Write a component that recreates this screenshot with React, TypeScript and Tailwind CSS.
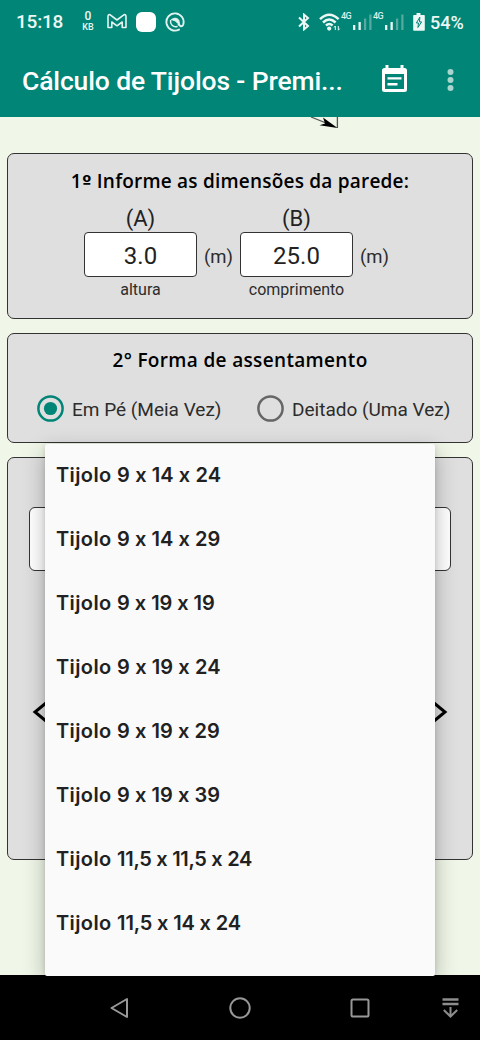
import React from 'react';

const bricks = [
  { size: '9 x 14 x 24', spacing: 'tracking-[0.1px]' },
  { size: '9 x 14 x 29', spacing: 'tracking-[0.05px]' },
  { size: '9 x 19 x 19', spacing: 'tracking-[-0.05px]' },
  { size: '9 x 19 x 24', spacing: 'tracking-[0.1px]' },
  { size: '9 x 19 x 29', spacing: 'tracking-[0.05px]' },
  { size: '9 x 19 x 39', spacing: 'tracking-[0.05px]' },
  { size: '11,5 x 11,5 x 24', spacing: 'tracking-[-0.3px]' },
  { size: '11,5 x 14 x 24', spacing: 'tracking-[-0.15px]' },
];

function GmailIcon() {
  return (
    <svg className="ml-[13px] h-[18px] w-[20px]" viewBox="0 0 20 18" fill="none" stroke="#e4f3f0" strokeWidth="1.6" strokeLinejoin="round">
      <path d="M1 3.6Q1 1 3.2 1.8L10 7L16.800 1.8Q19 1 19 3.6V14.500H15.200V9L10 12.800L4.800 9V14.500H1Z" />
    </svg>
  );
}

function ChatIcon() {
  return (
    <svg className="ml-[9px] h-5 w-5" viewBox="0 0 20 20" fill="none" stroke="#e4f3f0" strokeWidth="1.9" strokeLinecap="round">
      <path d="M14 17.600A8.600 8.600 0 1 1 18.200 12.600Q17.400 14.600 15.600 14.200L13.500 12.500" />
      <path d="M12 14.600A5.200 5.200 0 0 1 5.600 8.500" strokeWidth="1.5" />
      <path d="M6.500 7.400Q11.500 4.200 14 8.500L14.800 13.300L10.500 9.200Z" fill="#e4f3f0" strokeWidth="0.8" />
    </svg>
  );
}

function BluetoothIcon() {
  return (
    <svg className="h-[18px] w-[12px]" viewBox="0 0 12 18" fill="none" stroke="#edf8f5" strokeWidth="2">
      <path d="M1 4.5L10 13L6 16.4V1.6L10 5L1 13.5" />
    </svg>
  );
}

function WifiIcon() {
  return (
    <svg className="ml-[9px] h-[19px] w-[22px]" viewBox="0 0 22 19" fill="none" stroke="#edf8f5" strokeWidth="2.5">
      <path d="M1 6.2Q10.2 -2.8 19.6 6.2M4 9.5Q10.2 3.6 16.6 9.5M7 12.5Q10.2 9.5 13.6 12.5" />
      <circle cx="10.2" cy="15.6" r="2.1" fill="#edf8f5" stroke="none" />
      <path d="M16.3 17V13L15 14.5M19.3 13V17.2L20.8 15.6" strokeWidth="1" />
    </svg>
  );
}

function SignalIcon() {
  return (
    <span className="flex w-8 items-start">
      <span className="-mt-[2px] w-[11px] font-[Roboto] text-[9px] leading-[10px] font-medium tracking-[-0.6px] text-[#dcefeb]">4G</span>
      <svg className="h-[18px] w-5" viewBox="0 0 20 18">
        <path d="M1 12h2.3v5H1zM6.5 9h2.3v8H6.5z" fill="#edf8f5" />
        <path d="M12 5.5h2.2V17H12zM17.3 1.5h2.2V17h-2.2z" fill="#58aaa0" />
      </svg>
    </span>
  );
}

function BatteryIcon() {
  return (
    <svg className="ml-2 h-[18px] w-[12px]" viewBox="0 0 12 18">
      <path d="M3.5 0h4v2H11q.8 0 .8.8V17q0 .8-.8.8H1q-.8 0-.8-.8V2.800Q.2 2 1 2h2.500z" fill="#edf8f5" />
      <path d="M6.800 4.200L3.400 10H5.500L4.900 14.500L8.600 8.900H6.500z" fill="#edf8f5" stroke="#008577" strokeWidth="1" />
    </svg>
  );
}

function StatusBar() {
  return (
    <div className="flex h-11 items-center pl-4 font-[Roboto,sans-serif] text-[#edf8f5]">
      <span className="w-[66px] text-[19px] font-medium tracking-[-0.2px]">15:18</span>
      <span className="flex w-3 flex-col items-center font-medium">
        <span className="text-[12px] leading-[11px]">0</span>
        <span className="text-[9px] leading-[11px]">KB</span>
      </span>
      <GmailIcon />
      <span className="ml-[9px] size-5 rounded-[6px] bg-white" />
      <ChatIcon />
      <span className="ml-auto flex items-center pr-[15px]">
        <BluetoothIcon />
        <WifiIcon />
        <SignalIcon />
        <SignalIcon />
        <BatteryIcon />
        <span className="ml-[5px] w-[35px] text-[18px] font-medium whitespace-nowrap">54%</span>
      </span>
    </div>
  );
}

function AppBar() {
  return (
    <div className="flex h-[73px] items-center pl-[22px] text-white">
      <h1 className="w-[360px] font-[Roboto,sans-serif] text-[26.500px] font-medium tracking-[-0.14px] whitespace-nowrap">Cálculo de Tijolos - Premi...</h1>
      <svg className="-mt-1 h-[27px] w-[25px] shrink-0" viewBox="0 0 25 27">
        <path fillRule="evenodd" d="M3.500 0H6.500V3H18.500V0H21.500V3H22.500Q25 3 25 5.500V24.500Q25 27 22.500 27H2.500Q0 27 0 24.500V5.500Q0 3 2.500 3H3.500ZM3 9V24H22V9Z" fill="#fff" />
        <path d="M5.500 12.200h14v2.400h-14zM5.500 18h10v2.400h-10z" fill="#fff" />
      </svg>
      <svg className="-mt-px ml-10 h-6 w-[7px]" viewBox="0 0 7 24" fill="#a9d5cf">
        <circle cx="3.500" cy="4" r="3" />
        <circle cx="3.500" cy="12" r="3" />
        <circle cx="3.500" cy="20" r="3" />
      </svg>
    </div>
  );
}

function Dimension({ mark, value, caption }: { mark: string; value: string; caption: string }) {
  return (
    <div className="flex w-[156px] flex-col">
      <div className="flex h-[28px] w-[113px] items-center justify-center text-[22px] text-[#222]">{mark}</div>
      <div className="flex items-center">
        <div className="flex h-[45px] w-[113px] shrink-0 items-center justify-center rounded-[4px] border border-[#333] bg-white pt-[3px] text-[24px] text-[#222]">{value}</div>
        <span className="ml-[7px] pt-[6px] text-[18.500px] text-[#2c2c2c]">(m)</span>
      </div>
      <div className="flex h-[24px] w-[113px] items-center justify-center pt-px text-[16px] text-[#2c2c2c]">{caption}</div>
    </div>
  );
}

function Radio({ checked }: { checked?: boolean }) {
  return (
    <svg className="size-[27px] shrink-0" viewBox="0 0 27 27" fill="none">
      <circle cx="13.500" cy="13.500" r="12.100" stroke={checked ? '#008577' : '#666'} strokeWidth="2.500" />
      {checked && <circle cx="13.500" cy="13.500" r="6.600" fill="#008577" />}
    </svg>
  );
}

function NavBar() {
  return (
    <nav className="flex h-[65px] items-center bg-black">
      <svg className="ml-[110px] h-[22px] w-[19px]" viewBox="0 0 19 22" fill="none" stroke="#999" strokeWidth="2" strokeLinejoin="round">
        <path d="M17 2V20L1.500 11Z" />
      </svg>
      <svg className="ml-[100px] size-[22px]" viewBox="0 0 22 22" fill="none" stroke="#999" strokeWidth="2">
        <circle cx="11" cy="11" r="9.700" />
      </svg>
      <svg className="ml-[99px] size-5" viewBox="0 0 20 20" fill="none" stroke="#999" strokeWidth="2">
        <rect x="1.500" y="1.500" width="17" height="17" rx="1.500" />
      </svg>
      <svg className="ml-[72px] h-[21px] w-[17px]" viewBox="0 0 17 21" fill="none" stroke="#8d8d8d" strokeWidth="2">
        <path d="M.5 2.500H16.500M.5 7H16.500" strokeWidth="2.700" />
        <path d="M8.500 10V19.500M1.800 13L8.500 19.500L15.200 13" />
      </svg>
    </nav>
  );
}

export default function App() {
  return (
    <div className="relative flex h-[1040px] w-[480px] flex-col overflow-hidden bg-[#f0f7e8]">
      <header className="h-[117px] shrink-0 bg-[#008577]">
        <StatusBar />
        <AppBar />
      </header>

      <main className="flex h-[858px] shrink-0 flex-col px-[7px] font-[Roboto,sans-serif]">
        <svg className="ml-[303px] h-3 w-[30px] shrink-0" viewBox="0 0 30 12">
          <path d="M1 0L16 6M27.400 0V11" fill="none" stroke="#555" strokeWidth="1.3" />
          <path d="M27.500 11L9.500 8.200L15 6.500L13 .5Z" fill="#000" />
        </svg>

        <section className="mt-6 flex h-[166px] shrink-0 flex-col rounded-[7px] border border-[#333] bg-[#dfdfdf] pt-3">
          <h2 className="h-[38px] text-center font-[Open_Sans,sans-serif] text-[19px] leading-[30px] font-semibold tracking-[0.21px] text-black">
            1<span className="font-['DejaVu_Sans',sans-serif] text-[17px] leading-none font-bold">º</span> Informe as dimensões da parede:
          </h2>
          <div className="flex pl-[76px]">
            <Dimension mark="(A)" value="3.0" caption="altura" />
            <Dimension mark="(B)" value="25.0" caption="comprimento" />
          </div>
        </section>

        <section className="mt-[14px] flex h-[110px] shrink-0 flex-col rounded-[7px] border border-[#333] bg-[#dfdfdf] pt-3">
          <h2 className="h-[49px] text-center font-[Open_Sans,sans-serif] text-[19px] leading-[29px] font-semibold tracking-[0.34px] text-black">2° Forma de assentamento</h2>
          <div className="flex h-[27px] items-center pl-[29px] text-[19px] text-[#2c2c2c]">
            <Radio checked />
            <span className="ml-2 w-[185px] pt-[3px] whitespace-nowrap">Em Pé (Meia Vez)</span>
            <Radio />
            <span className="ml-2 pt-[3px] whitespace-nowrap">Deitado (Uma Vez)</span>
          </div>
        </section>

        <section className="mt-[14px] flex h-[403px] shrink-0 flex-col rounded-[7px] border border-[#333] bg-[#dfdfdf] px-[21px] pt-[49px]">
          <div className="h-[64px] rounded-[6px] border border-[#333] bg-white" />
          <div className="mt-[130px] flex justify-between pr-[3px] pl-[3px]">
            <svg className="h-[22px] w-4" viewBox="0 0 16 22" fill="none" stroke="#000" strokeWidth="3">
              <path d="M14 2L3 11L14 20" />
            </svg>
            <svg className="h-[22px] w-4" viewBox="0 0 16 22" fill="none" stroke="#000" strokeWidth="3">
              <path d="M2 2L13 11L2 20" />
            </svg>
          </div>
        </section>
      </main>

      <div className="absolute top-[444px] left-[45px] h-[532px] w-[390px] overflow-visible rounded-[2px] bg-[#fafafa] shadow-[0_7px_22px_rgba(0,0,0,0.28),0_1px_5px_rgba(0,0,0,0.12)]">
        <ul className="font-[Inter,sans-serif] text-[20px] font-semibold text-[#212121] [font-feature-settings:'calt'_0]">
          {bricks.map(({ size, spacing }) => (
            <li key={size} className="flex h-16 items-center pb-0.5 pl-[11px] whitespace-pre">
              <span className="tracking-[0.4px]">{'Tijolo '}</span>
              <span className={spacing}>{size}</span>
            </li>
          ))}
        </ul>
      </div>

      <NavBar />
    </div>
  );
}
